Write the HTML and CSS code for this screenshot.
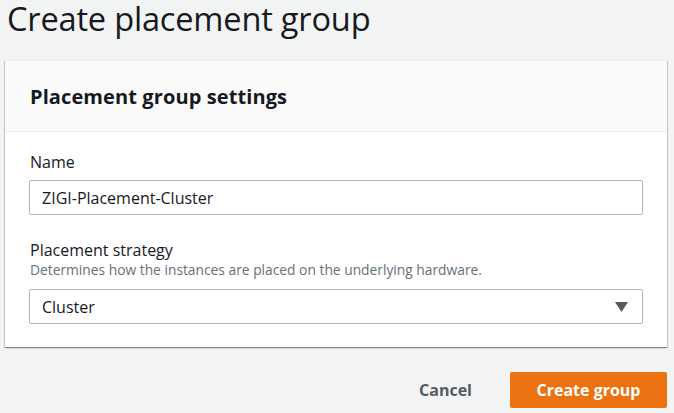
FILE: index.html
```html
<!DOCTYPE html>
<html>
<head>
<meta charset="utf-8">
<link rel="stylesheet" href="styles.css">
</head>
<body>
<h1 class="title">Create placement group</h1>
<div class="panel">
  <div class="panel-header"><h2>Placement group settings</h2></div>
  <div class="panel-body">
    <div class="field">
      <label class="label">Name</label>
      <div class="input">ZIGI-Placement-Cluster</div>
    </div>
    <div class="field field-strategy">
      <label class="label">Placement strategy</label>
      <div class="desc">Determines how the instances are placed on the underlying hardware.</div>
      <div class="input select">
        <span>Cluster</span>
        <svg class="caret" width="13" height="10" viewBox="0 0 13 10"><path d="M0 0H13L6.5 10Z" fill="#545b64"/></svg>
      </div>
    </div>
  </div>
</div>
<div class="actions">
  <button class="btn-link">Cancel</button>
  <button class="btn-primary">Create group</button>
</div>
</body>
</html>
```
FILE: styles.css
```css
html, body { margin: 0; padding: 0; }
body {
  background: #f2f3f3;
  font-family: "Open Sans", "Noto Sans", sans-serif;
  color: #16191f;
  width: 674px;
  height: 413px;
  overflow: hidden;
}
.title {
  margin: 0;
  padding: 1px 0 0 7px;
  font-size: 32.6px;
  font-weight: 400;
  line-height: 36px;
  height: 59px;
  letter-spacing: -0.2px;
}
.panel {
  margin-left: 5px;
  width: 662px;
  background: #fff;
  box-shadow: 0 1px 1px 0 rgba(0,28,36,0.3), 1px 1px 1px 0 rgba(0,28,36,0.15), -1px 1px 1px 0 rgba(0,28,36,0.15);
  border-top: 1px solid #eaeded;
  box-sizing: border-box;
}
.panel-header {
  background: #fafafa;
  border-bottom: 1px solid #eaeded;
  height: 71px;
  box-sizing: border-box;
  display: flex;
  align-items: center;
  padding-left: 25px;
}
.panel-header h2 {
  margin: 0;
  font-size: 20px;
  font-weight: 700;
  letter-spacing: 0.1px;
}
.panel-body {
  padding: 19px 24px 23px 24px;
}
.label {
  display: block;
  font-size: 16px;
  line-height: 22px;
  padding-left: 1px;
  color: #16191f;
}
.field .input { margin-top: 7px; }
.field-strategy { margin-top: 24px; }
.field-strategy .input { margin-top: 10px; }
.desc {
  font-size: 13.8px;
  line-height: 18px;
  color: #687078;
  padding-left: 1px;
}
.input {
  height: 35px;
  box-sizing: border-box;
  border: 1px solid #aab7b8;
  border-radius: 2px;
  padding: 0 12px;
  display: flex;
  align-items: center;
  font-size: 16px;
  color: #16191f;
  width: 614px;
}
.select { justify-content: space-between; }
.caret { margin-right: 2px; }
.actions {
  display: flex;
  justify-content: flex-end;
  align-items: center;
  gap: 38px;
  padding-right: 7px;
  margin-top: 25px;
}
.btn-link {
  background: none;
  border: none;
  font-family: inherit;
  font-size: 16px;
  font-weight: 700;
  color: #545b64;
  padding: 0;
}
.btn-primary {
  background: #ec7211;
  color: #fff;
  border: none;
  border-radius: 2px;
  font-family: inherit;
  font-size: 16px;
  font-weight: 700;
  width: 157px;
  height: 36px;
  padding: 0;
}
```
